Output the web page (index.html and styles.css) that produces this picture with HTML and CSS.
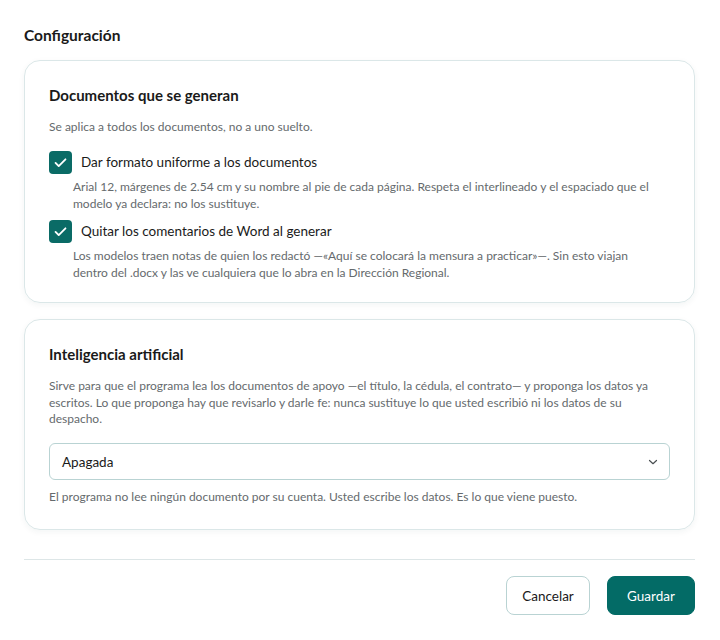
FILE: index.html
```html
<!DOCTYPE html>
<html lang="es">
<head>
<meta charset="utf-8">
<link rel="stylesheet" href="styles.css">
</head>
<body>
<main class="page">
  <h1 class="title">Configuración</h1>

  <section class="card">
    <h2 class="card-title">Documentos que se generan</h2>
    <p class="lead">Se aplica a todos los documentos, no a uno suelto.</p>

    <div class="option">
      <label class="check-row">
        <span class="box"><svg viewBox="0 0 24 24" width="17" height="17"><path d="M5 12.5l4.5 4.5L19 7.5" fill="none" stroke="#fff" stroke-width="2.6" stroke-linecap="round" stroke-linejoin="round"/></svg></span>
        <span class="check-label">Dar formato uniforme a los documentos</span>
      </label>
      <p class="hint">Arial 12, márgenes de 2.54 cm y su nombre al pie de cada página. Respeta el interlineado y el espaciado que el modelo ya declara: no los sustituye.</p>
    </div>

    <div class="option">
      <label class="check-row">
        <span class="box"><svg viewBox="0 0 24 24" width="17" height="17"><path d="M5 12.5l4.5 4.5L19 7.5" fill="none" stroke="#fff" stroke-width="2.6" stroke-linecap="round" stroke-linejoin="round"/></svg></span>
        <span class="check-label">Quitar los comentarios de Word al generar</span>
      </label>
      <p class="hint hint-narrow">Los modelos traen notas de quien los redactó —«Aquí se colocará la mensura a practicar»—. Sin esto viajan dentro del .docx y las ve cualquiera que lo abra en la Dirección Regional.</p>
    </div>
  </section>

  <section class="card card-ai">
    <h2 class="card-title">Inteligencia artificial</h2>
    <p class="lead">Sirve para que el programa lea los documentos de apoyo —el título, la cédula, el contrato— y proponga los datos ya escritos. Lo que proponga hay que revisarlo y darle fe: nunca sustituye lo que usted escribió ni los datos de su despacho.</p>
    <div class="select">
      <span>Apagada</span>
      <svg class="chev" viewBox="0 0 10 10" width="10" height="10"><path d="M1.5 3.5l3.5 3.2 3.5-3.2" fill="none" stroke="#4a4f52" stroke-width="1.2" stroke-linecap="round" stroke-linejoin="round"/></svg>
    </div>
    <p class="help">El programa no lee ningún documento por su cuenta. Usted escribe los datos. Es lo que viene puesto.</p>
  </section>

  <footer class="actions">
    <button class="btn btn-secondary">Cancelar</button>
    <button class="btn btn-primary">Guardar</button>
  </footer>
</main>
</body>
</html>
```

FILE: styles.css
```css
* { box-sizing: border-box; }
html, body { margin: 0; padding: 0; background: #ffffff; }
body {
  font-family: Lato, "Open Sans", "Liberation Sans", sans-serif;
  color: #1a1a1a;
}
.page {
  padding: 24px 25px 24px 24px;
  display: flex;
  flex-direction: column;
}
.title {
  font-size: 15.5px;
  font-weight: 700;
  margin: 0 0 14px;
  line-height: 22px;
}
.card {
  border: 1px solid #dbe7e8;
  border-radius: 16px;
  padding: 24px 24px 21px 24px;
  box-shadow: 0 2px 6px rgba(0, 60, 60, 0.05);
  margin-bottom: 16px;
}
.card-ai { padding-bottom: 24px; margin-bottom: 29px; }
.card-title {
  font-size: 15px;
  font-weight: 700;
  margin: 0 0 14px;
  line-height: 20px;
}
.lead {
  font-size: 12px;
  color: #656a6d;
  margin: 0 0 15px;
  line-height: 16.8px;
}
.card-ai .lead { margin-bottom: 15px; }
.option { margin-bottom: 8px; }
.option:last-child { margin-bottom: 0; }
.check-row {
  display: flex;
  align-items: center;
  gap: 9px;
}
.box {
  width: 23px;
  height: 23px;
  border-radius: 4px;
  background: #0a6b66;
  display: flex;
  align-items: center;
  justify-content: center;
  flex: none;
}
.check-label {
  font-size: 13.5px;
  line-height: 20px;
  color: #1a1a1a;
}
.hint {
  font-size: 12px;
  color: #656a6d;
  margin: 4px 0 0 24px;
  line-height: 17px;
}
.hint-narrow { max-width: 580px; }
.select {
  height: 37px;
  border: 1px solid #b9d3d3;
  border-radius: 6px;
  display: flex;
  align-items: center;
  justify-content: space-between;
  padding: 0 11px 0 12px;
  font-size: 13.5px;
  color: #1a1a1a;
}
.help {
  font-size: 12px;
  color: #656a6d;
  margin: 8.5px 0 0;
  line-height: 16.8px;
}
.actions {
  border-top: 1px solid #dde6e7;
  padding-top: 16px;
  display: flex;
  justify-content: flex-end;
  gap: 17px;
}
.btn {
  font-family: inherit;
  font-size: 13.5px;
  height: 39px;
  border-radius: 8px;
}
.btn-secondary {
  width: 84px;
  background: #fff;
  border: 1px solid #b9d3d3;
  color: #1a1a1a;
}
.btn-primary {
  width: 88px;
  background: #036b66;
  border: 1px solid #036b66;
  color: #fff;
}
```
